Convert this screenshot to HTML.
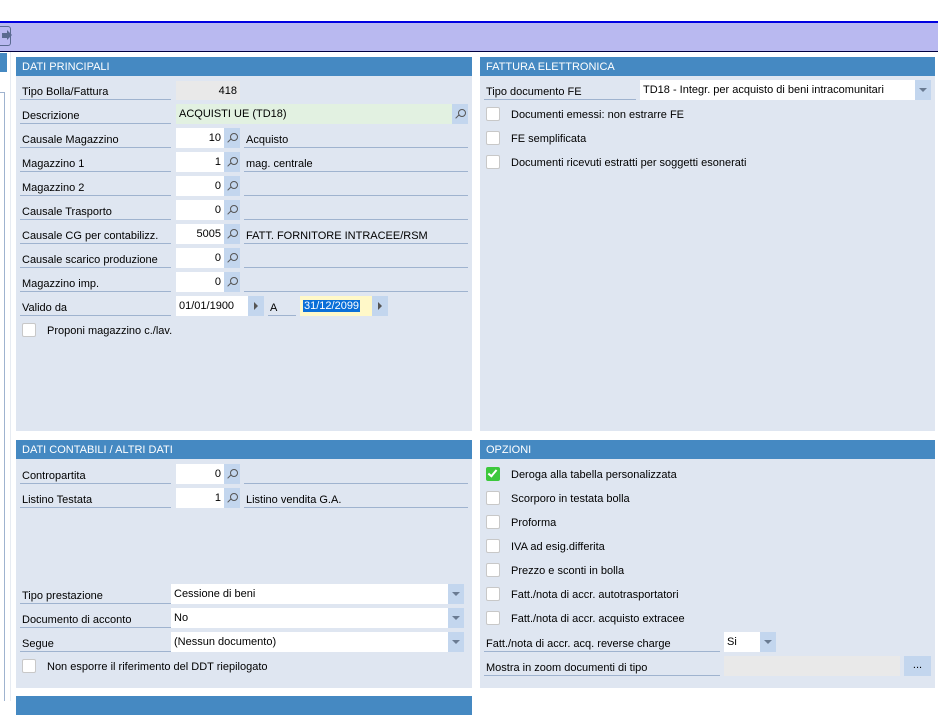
<!DOCTYPE html>
<html><head><meta charset="utf-8"><style>
*{margin:0;padding:0;box-sizing:border-box}
body{width:938px;height:701px;overflow:hidden;background:#fff;position:relative;font-family:Tahoma,"Liberation Sans","DejaVu Sans",sans-serif;font-size:11px;color:#000}
div,span{position:absolute}
.hdr{background:#4589c2;color:#fff;height:19px;line-height:21px;padding-left:6px;font-size:11px}
.body{background:#dfe6f1}
.lbl{height:19px;line-height:22px;padding-left:2px;border-bottom:1px solid #9fb3cf}
.in{background:#fff;height:20px;line-height:21px;padding:0 3px}
.r{text-align:right}
.btn{background:#c3d6ee;height:20px;width:16px}
.lens::after{content:"";position:absolute;left:6px;top:5px;width:6px;height:6px;border:1.3px solid #555;border-radius:50%}
.lens::before{content:"";position:absolute;left:3px;top:12px;width:5px;height:1.3px;background:#555;transform:rotate(-45deg)}
.arr::after{content:"";position:absolute;left:6px;top:6px;border-left:4px solid #555;border-top:4px solid transparent;border-bottom:4px solid transparent}
.dd::after{content:"";position:absolute;left:4px;top:8px;border-top:4px solid #6a7b92;border-left:4px solid transparent;border-right:4px solid transparent}
.cb{width:14px;height:14px;background:#fff;border:1px solid #c8c8c8;border-radius:2px}
.ct{line-height:16px}
</style></head><body>
<div style="left:0;top:21px;width:938px;height:2px;background:#0000e0"></div>
<div style="left:0;top:23px;width:938px;height:28px;background:#b9b9f0"></div>
<div style="left:0;top:51px;width:938px;height:1px;background:#000040"></div>
<div style="left:-2px;top:26px;width:13px;height:20px;border:1.5px solid #5a6a90;border-left:none;border-radius:0 3px 3px 0"></div>
<div style="left:2px;top:33px;width:5px;height:5px;background:#5a6a90"></div>
<div style="left:7px;top:30px;border-left:5px solid #5a6a90;border-top:5px solid transparent;border-bottom:5px solid transparent"></div>
<div style="left:0;top:53px;width:7px;height:19px;background:#4589c2"></div>
<div style="left:0;top:92px;width:5px;height:609px;border-top:1px solid #9fb3cf;border-right:1px solid #9fb3cf"></div>
<div style="left:10px;top:52px;width:1px;height:649px;background:#e6ebf2"></div>

<div class="body" style="left:16px;top:57px;width:456px;height:374px"></div>
<div class="hdr" style="left:16px;top:57px;width:456px">DATI PRINCIPALI</div>

<div class="lbl" style="left:20px;top:81px;width:151px">Tipo Bolla/Fattura</div>
<div class="in r" style="left:176px;top:81px;width:64px;background:#e9e9e9;height:19px">418</div>

<div class="lbl" style="left:20px;top:105px;width:151px">Descrizione</div>
<div class="in" style="left:176px;top:104px;width:276px;background:#e2f1e1">ACQUISTI UE (TD18)</div>
<div class="btn lens" style="left:452px;top:104px"></div>

<div class="lbl" style="left:20px;top:129px;width:151px">Causale Magazzino</div>
<div class="in r" style="left:176px;top:128px;width:48px">10</div><div class="btn lens" style="left:224px;top:128px"></div>
<div class="lbl" style="left:244px;top:129px;width:224px">Acquisto</div>

<div class="lbl" style="left:20px;top:153px;width:151px">Magazzino 1</div>
<div class="in r" style="left:176px;top:152px;width:48px">1</div><div class="btn lens" style="left:224px;top:152px"></div>
<div class="lbl" style="left:244px;top:153px;width:224px">mag. centrale</div>

<div class="lbl" style="left:20px;top:177px;width:151px">Magazzino 2</div>
<div class="in r" style="left:176px;top:176px;width:48px">0</div><div class="btn lens" style="left:224px;top:176px"></div>
<div class="lbl" style="left:244px;top:177px;width:224px"></div>

<div class="lbl" style="left:20px;top:201px;width:151px">Causale Trasporto</div>
<div class="in r" style="left:176px;top:200px;width:48px">0</div><div class="btn lens" style="left:224px;top:200px"></div>
<div class="lbl" style="left:244px;top:201px;width:224px"></div>

<div class="lbl" style="left:20px;top:225px;width:151px">Causale CG per contabilizz.</div>
<div class="in r" style="left:176px;top:224px;width:48px">5005</div><div class="btn lens" style="left:224px;top:224px"></div>
<div class="lbl" style="left:244px;top:225px;width:224px">FATT. FORNITORE INTRACEE/RSM</div>

<div class="lbl" style="left:20px;top:249px;width:151px">Causale scarico produzione</div>
<div class="in r" style="left:176px;top:248px;width:48px">0</div><div class="btn lens" style="left:224px;top:248px"></div>
<div class="lbl" style="left:244px;top:249px;width:224px"></div>

<div class="lbl" style="left:20px;top:273px;width:151px">Magazzino imp.</div>
<div class="in r" style="left:176px;top:272px;width:48px">0</div><div class="btn lens" style="left:224px;top:272px"></div>
<div class="lbl" style="left:244px;top:273px;width:224px"></div>

<div class="lbl" style="left:20px;top:297px;width:151px">Valido da</div>
<div class="in" style="left:176px;top:296px;width:72px">01/01/1900</div><div class="btn arr" style="left:248px;top:296px"></div>
<div class="lbl" style="left:268px;top:297px;width:28px">A</div>
<div class="in" style="left:300px;top:296px;width:72px;background:#fff8c8"><span style="position:relative;background:#0a6fd8;color:#fff;line-height:13px;padding:0 1px">31/12/2099</span></div><div class="btn arr" style="left:372px;top:296px"></div>

<div class="cb" style="left:22px;top:323px"></div><div class="ct" style="left:47px;top:323px">Proponi magazzino c./lav.</div>

<div class="body" style="left:480px;top:57px;width:455px;height:374px"></div>
<div class="hdr" style="left:480px;top:57px;width:455px">FATTURA ELETTRONICA</div>
<div class="lbl" style="left:484px;top:81px;width:152px">Tipo documento FE</div>
<div class="in" style="left:640px;top:80px;width:275px">TD18 - Integr. per acquisto di beni intracomunitari</div><div class="btn dd" style="left:915px;top:80px"></div>
<div class="cb" style="left:486px;top:107px"></div><div class="ct" style="left:511px;top:107px">Documenti emessi: non estrarre FE</div>
<div class="cb" style="left:486px;top:131px"></div><div class="ct" style="left:511px;top:131px">FE semplificata</div>
<div class="cb" style="left:486px;top:155px"></div><div class="ct" style="left:511px;top:155px">Documenti ricevuti estratti per soggetti esonerati</div>

<div class="body" style="left:16px;top:440px;width:456px;height:248px"></div>
<div class="hdr" style="left:16px;top:440px;width:456px">DATI CONTABILI / ALTRI DATI</div>
<div class="lbl" style="left:20px;top:465px;width:151px">Contropartita</div>
<div class="in r" style="left:176px;top:464px;width:48px">0</div><div class="btn lens" style="left:224px;top:464px"></div>
<div class="lbl" style="left:244px;top:465px;width:224px"></div>
<div class="lbl" style="left:20px;top:489px;width:151px">Listino Testata</div>
<div class="in r" style="left:176px;top:488px;width:48px">1</div><div class="btn lens" style="left:224px;top:488px"></div>
<div class="lbl" style="left:244px;top:489px;width:224px">Listino vendita G.A.</div>

<div class="lbl" style="left:20px;top:585px;width:151px">Tipo prestazione</div>
<div class="in" style="left:171px;top:584px;width:277px">Cessione di beni</div><div class="btn dd" style="left:448px;top:584px"></div>
<div class="lbl" style="left:20px;top:609px;width:151px">Documento di acconto</div>
<div class="in" style="left:171px;top:608px;width:277px">No</div><div class="btn dd" style="left:448px;top:608px"></div>
<div class="lbl" style="left:20px;top:633px;width:151px">Segue</div>
<div class="in" style="left:171px;top:632px;width:277px">(Nessun documento)</div><div class="btn dd" style="left:448px;top:632px"></div>
<div class="cb" style="left:22px;top:659px"></div><div class="ct" style="left:47px;top:659px">Non esporre il riferimento del DDT riepilogato</div>

<div class="body" style="left:480px;top:440px;width:455px;height:248px"></div>
<div class="hdr" style="left:480px;top:440px;width:455px">OPZIONI</div>
<div class="cb" style="left:486px;top:467px;background:#3cc83c;border-color:#3cc83c"><span style="left:3px;top:0px;width:5px;height:9px;border-right:2px solid #fff;border-bottom:2px solid #fff;transform:rotate(40deg)"></span></div><div class="ct" style="left:511px;top:467px">Deroga alla tabella personalizzata</div>
<div class="cb" style="left:486px;top:491px"></div><div class="ct" style="left:511px;top:491px">Scorporo in testata bolla</div>
<div class="cb" style="left:486px;top:515px"></div><div class="ct" style="left:511px;top:515px">Proforma</div>
<div class="cb" style="left:486px;top:539px"></div><div class="ct" style="left:511px;top:539px">IVA ad esig.differita</div>
<div class="cb" style="left:486px;top:563px"></div><div class="ct" style="left:511px;top:563px">Prezzo e sconti in bolla</div>
<div class="cb" style="left:486px;top:587px"></div><div class="ct" style="left:511px;top:587px">Fatt./nota di accr. autotrasportatori</div>
<div class="cb" style="left:486px;top:611px"></div><div class="ct" style="left:511px;top:611px">Fatt./nota di accr. acquisto extracee</div>
<div class="lbl" style="left:484px;top:633px;width:236px">Fatt./nota di accr. acq. reverse charge</div>
<div class="in" style="left:724px;top:632px;width:36px">Si</div><div class="btn dd" style="left:760px;top:632px"></div>
<div class="lbl" style="left:484px;top:657px;width:236px">Mostra in zoom documenti di tipo</div>
<div class="in" style="left:724px;top:656px;width:176px;background:#e9e9e9"></div>
<div class="btn" style="left:904px;top:656px;width:27px;text-align:center;line-height:18px">...</div>

<div class="hdr" style="left:16px;top:696px;width:456px"></div>
</body></html>
